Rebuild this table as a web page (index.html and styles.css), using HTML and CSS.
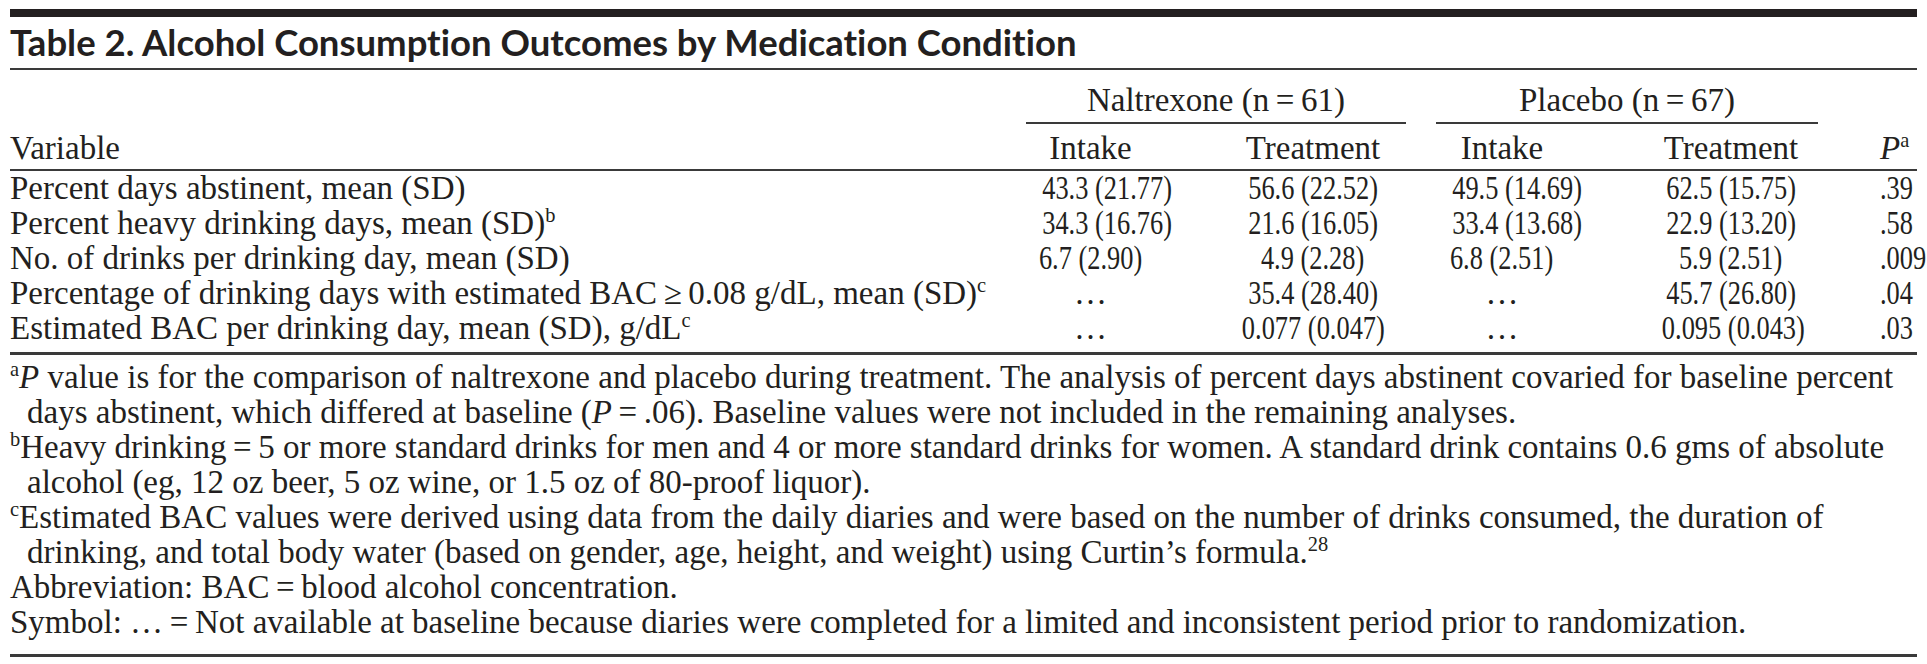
FILE: index.html
```html
<!DOCTYPE html>
<html lang="en">
<head>
<meta charset="utf-8">
<title>Table 2. Alcohol Consumption Outcomes by Medication Condition</title>
<link rel="stylesheet" href="styles.css">
</head>
<body>
<div class="page">
  <div class="topbar"></div>
  <h1 class="title">Table 2. Alcohol Consumption Outcomes by Medication Condition</h1>
  <table class="data">
    <colgroup>
      <col class="c-var">
      <col class="c-n1">
      <col class="c-n2">
      <col class="c-gap">
      <col class="c-p1">
      <col class="c-p2">
      <col class="c-p">
    </colgroup>
    <thead>
      <tr class="spanrow">
        <th class="var" rowspan="2">Variable</th>
        <th class="group" colspan="2">Naltrexone (n&#8201;=&#8201;61)</th>
        <th class="gap"></th>
        <th class="group" colspan="2">Placebo (n&#8201;=&#8201;67)</th>
        <th class="pcol" rowspan="2"><i>P</i><sup>a</sup></th>
      </tr>
      <tr class="headrow">
        <th class="num">Intake</th>
        <th class="num treat">Treatment</th>
        <th class="gap"></th>
        <th class="num">Intake</th>
        <th class="num treat2">Treatment</th>
      </tr>
    </thead>
    <tbody>
      <tr>
        <td class="var">Percent days abstinent, mean (SD)</td>
        <td class="num"><span class="fig">43.3 (21.77)</span></td>
        <td class="num treat"><span class="fig">56.6 (22.52)</span></td>
        <td class="gap"></td>
        <td class="num"><span class="fig">49.5 (14.69)</span></td>
        <td class="num treat2"><span class="fig">62.5 (15.75)</span></td>
        <td class="pcol"><span class="fig">.39</span></td>
      </tr>
      <tr>
        <td class="var">Percent heavy drinking days, mean (SD)<sup>b</sup></td>
        <td class="num"><span class="fig">34.3 (16.76)</span></td>
        <td class="num treat"><span class="fig">21.6 (16.05)</span></td>
        <td class="gap"></td>
        <td class="num"><span class="fig">33.4 (13.68)</span></td>
        <td class="num treat2"><span class="fig">22.9 (13.20)</span></td>
        <td class="pcol"><span class="fig">.58</span></td>
      </tr>
      <tr>
        <td class="var">No. of drinks per drinking day, mean (SD)</td>
        <td class="num"><span class="fig">6.7 (2.90)</span></td>
        <td class="num treat"><span class="fig">4.9 (2.28)</span></td>
        <td class="gap"></td>
        <td class="num"><span class="fig">6.8 (2.51)</span></td>
        <td class="num treat2"><span class="fig">5.9 (2.51)</span></td>
        <td class="pcol"><span class="fig">.009</span></td>
      </tr>
      <tr>
        <td class="var">Percentage of drinking days with estimated BAC&#8201;≥&#8201;0.08 g/dL, mean (SD)<sup>c</sup></td>
        <td class="num">…</td>
        <td class="num treat"><span class="fig">35.4 (28.40)</span></td>
        <td class="gap"></td>
        <td class="num">…</td>
        <td class="num treat2"><span class="fig">45.7 (26.80)</span></td>
        <td class="pcol"><span class="fig">.04</span></td>
      </tr>
      <tr class="last">
        <td class="var">Estimated BAC per drinking day, mean (SD), g/dL<sup>c</sup></td>
        <td class="num">…</td>
        <td class="num treat"><span class="fig">0.077 (0.047)</span></td>
        <td class="gap"></td>
        <td class="num">…</td>
        <td class="num treat2"><span class="fig">0.095 (0.043)</span></td>
        <td class="pcol"><span class="fig">.03</span></td>
      </tr>
    </tbody>
  </table>
  <div class="notes">
    <p class="note"><sup>a</sup><i>P</i> value is for the comparison of naltrexone and placebo during treatment. The analysis of percent days abstinent covaried for baseline percent<br>days abstinent, which differed at baseline (<i>P</i>&#8201;=&#8201;.06). Baseline values were not included in the remaining analyses.</p>
    <p class="note"><sup>b</sup>Heavy drinking&#8201;=&#8201;5 or more standard drinks for men and 4 or more standard drinks for women. A standard drink contains 0.6 gms of absolute<br>alcohol (eg, 12 oz beer, 5 oz wine, or 1.5 oz of 80-proof liquor).</p>
    <p class="note"><sup>c</sup>Estimated BAC values were derived using data from the daily diaries and were based on the number of drinks consumed, the duration of<br>drinking, and total body water (based on gender, age, height, and weight) using Curtin’s formula.<sup>28</sup></p>
    <p class="note">Abbreviation: BAC&#8201;=&#8201;blood alcohol concentration.</p>
    <p class="note">Symbol: …&#8201;=&#8201;Not available at baseline because diaries were completed for a limited and inconsistent period prior to randomization.</p>
  </div>
</div>
</body>
</html>
```
FILE: styles.css
```css
html, body {
  margin: 0;
  padding: 0;
  background: #ffffff;
}

.page {
  width: 1907px;
  padding: 9px 10px 0 10px;
  color: #231f20;
  font-family: "Liberation Serif", "Times New Roman", serif;
}

.topbar {
  height: 8px;
  background: #231f20;
}

.title {
  margin: 5px 0 0 0;
  padding: 0 0 6px 0;
  font-family: Lato, "Liberation Sans", Arial, sans-serif;
  font-weight: 700;
  font-size: 36.5px;
  line-height: 40px;
  font-variant-ligatures: none;
  color: #231f20;
  border-bottom: 2px solid #3a3a3a;
  white-space: nowrap;
}

.data {
  width: 1907px;
  table-layout: fixed;
  border-collapse: separate;
  border-spacing: 0;
  font-size: 33px;
  line-height: 35px;
}

.c-var { width: 1016px; }
.c-n1 { width: 129px; }
.c-n2 { width: 251px; }
.c-gap { width: 30px; }
.c-p1 { width: 132px; }
.c-p2 { width: 250px; }
.c-p { width: 99px; }

.data th,
.data td {
  padding: 0;
  font-weight: 400;
  white-space: nowrap;
}

.data th.var,
.data td.var {
  text-align: left;
}

.data .num {
  text-align: center;
}

.data .treat {
  padding-left: 65px;
}

.data .treat2 {
  padding-left: 76px;
}

.data .pcol {
  text-align: left;
  padding-left: 62px;
}

.fig {
  display: inline-block;
  transform: scaleX(0.8);
}

.pcol .fig {
  transform-origin: left center;
}

/* spanner row */
.spanrow th {
  padding-top: 13px;
  padding-bottom: 4px;
  vertical-align: bottom;
}

.spanrow th.group {
  text-align: center;
  border-bottom: 2px solid #3a3a3a;
}

.spanrow th.var,
.spanrow th.pcol {
  padding-top: 0;
  padding-bottom: 3px;
  border-bottom: 2px solid #3a3a3a;
}

.spanrow th.pcol {
  padding-left: 62px;
}

.headrow th {
  padding-top: 7px;
  padding-bottom: 3px;
  border-bottom: 2px solid #3a3a3a;
  vertical-align: bottom;
}

.headrow th.treat { padding-left: 65px; }
.headrow th.treat2 { padding-left: 76px; }

tbody tr:first-child td {
  padding-top: 0;
}

tbody tr.last td {
  padding-bottom: 6px;
  border-bottom: 3px solid #3a3a3a;
}

.data sup,
.note sup {
  font-size: 0.62em;
  line-height: 0;
  vertical-align: 0.6em;
}

.notes {
  margin-top: 5px;
  padding-bottom: 14px;
  border-bottom: 3px solid #3a3a3a;
}

.note {
  margin: 0;
  padding-left: 17px;
  text-indent: -17px;
  font-size: 33px;
  line-height: 35px;
  white-space: nowrap;
}
```
